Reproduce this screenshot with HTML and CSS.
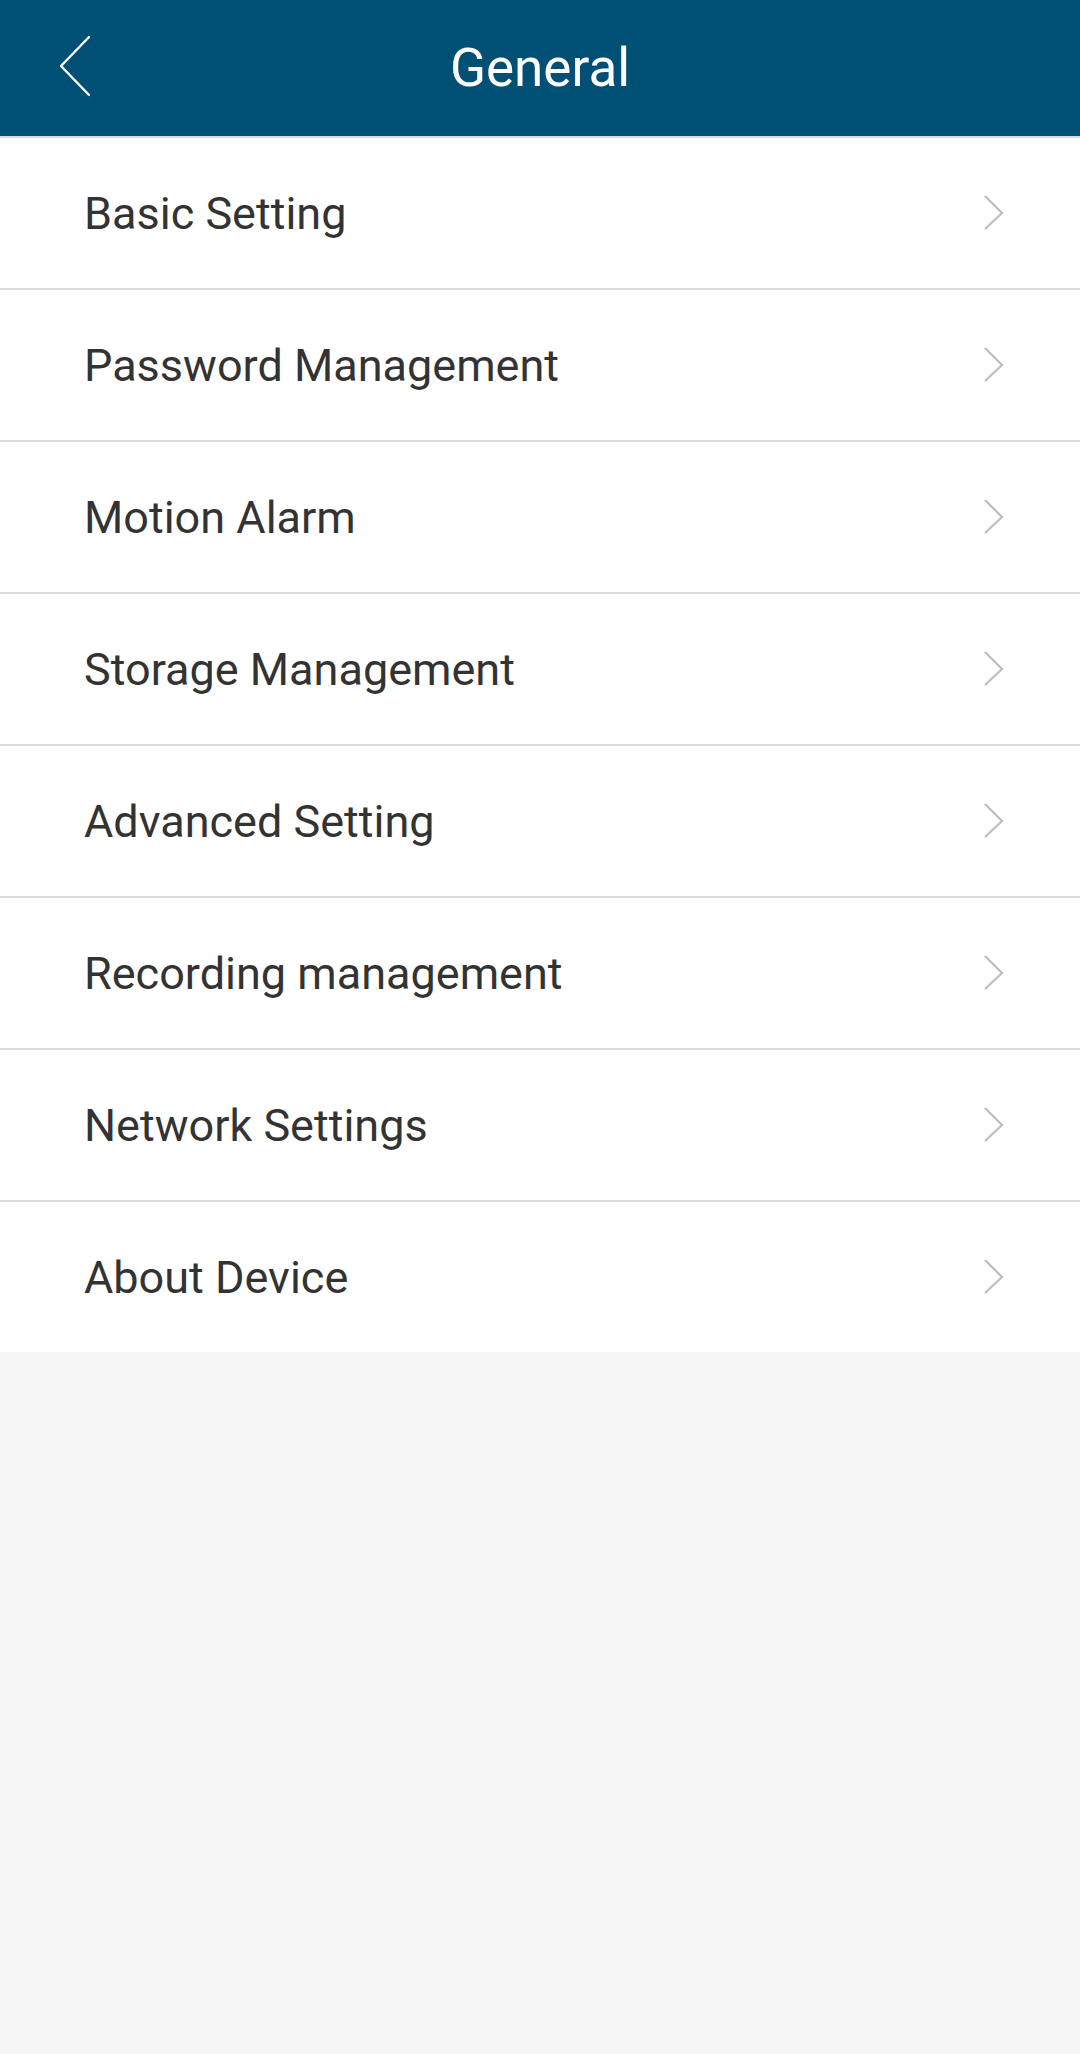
FILE: index.html
```html
<!DOCTYPE html>
<html>
<head>
<meta charset="utf-8">
<link rel="stylesheet" href="styles.css">
</head>
<body>
<header class="topbar">
  <svg class="back" width="40" height="70" viewBox="0 0 40 70"><polyline points="37,5 9,34 37,63" fill="none" stroke="#fff" stroke-width="2.4" stroke-linecap="round" stroke-linejoin="round"/></svg>
  <h1 class="title">General</h1>
</header>
<ul class="menu">
  <li class="item"><span class="label">Basic Setting</span><svg class="chev" width="24" height="40" viewBox="0 0 24 40"><polyline points="3,3 20,20 3,36" fill="none" stroke="#bdbdbd" stroke-width="2.2"/></svg></li>
  <li class="item"><span class="label">Password Management</span><svg class="chev" width="24" height="40" viewBox="0 0 24 40"><polyline points="3,3 20,20 3,36" fill="none" stroke="#bdbdbd" stroke-width="2.2"/></svg></li>
  <li class="item"><span class="label">Motion Alarm</span><svg class="chev" width="24" height="40" viewBox="0 0 24 40"><polyline points="3,3 20,20 3,36" fill="none" stroke="#bdbdbd" stroke-width="2.2"/></svg></li>
  <li class="item"><span class="label">Storage Management</span><svg class="chev" width="24" height="40" viewBox="0 0 24 40"><polyline points="3,3 20,20 3,36" fill="none" stroke="#bdbdbd" stroke-width="2.2"/></svg></li>
  <li class="item"><span class="label">Advanced Setting</span><svg class="chev" width="24" height="40" viewBox="0 0 24 40"><polyline points="3,3 20,20 3,36" fill="none" stroke="#bdbdbd" stroke-width="2.2"/></svg></li>
  <li class="item"><span class="label">Recording management</span><svg class="chev" width="24" height="40" viewBox="0 0 24 40"><polyline points="3,3 20,20 3,36" fill="none" stroke="#bdbdbd" stroke-width="2.2"/></svg></li>
  <li class="item"><span class="label">Network Settings</span><svg class="chev" width="24" height="40" viewBox="0 0 24 40"><polyline points="3,3 20,20 3,36" fill="none" stroke="#bdbdbd" stroke-width="2.2"/></svg></li>
  <li class="item"><span class="label">About Device</span><svg class="chev" width="24" height="40" viewBox="0 0 24 40"><polyline points="3,3 20,20 3,36" fill="none" stroke="#bdbdbd" stroke-width="2.2"/></svg></li>
</ul>
</body>
</html>
```
FILE: styles.css
```css
* { box-sizing: border-box; }
html, body {
  margin: 0;
  padding: 0;
  background: #f7f7f7;
  font-family: Roboto, "Liberation Sans", sans-serif;
}
.topbar {
  height: 136px;
  background: #004f74;
  display: flex;
  align-items: center;
  justify-content: center;
  position: relative;
}
.back {
  position: absolute;
  left: 52px;
  top: 32px;
}
.title {
  margin: 0;
  color: #fff;
  font-weight: 400;
  font-size: 53px;
  line-height: 1;
}
.menu {
  list-style: none;
  margin: 0;
  padding: 0;
  background: #fff;
}
.item {
  height: 152px;
  border-top: 2px solid #dcdcdc;
  display: flex;
  align-items: center;
  justify-content: space-between;
  padding: 0 74px 0 84px;
}
.label {
  font-size: 45px;
  color: #333;
}
.chev { display: block; }
```
